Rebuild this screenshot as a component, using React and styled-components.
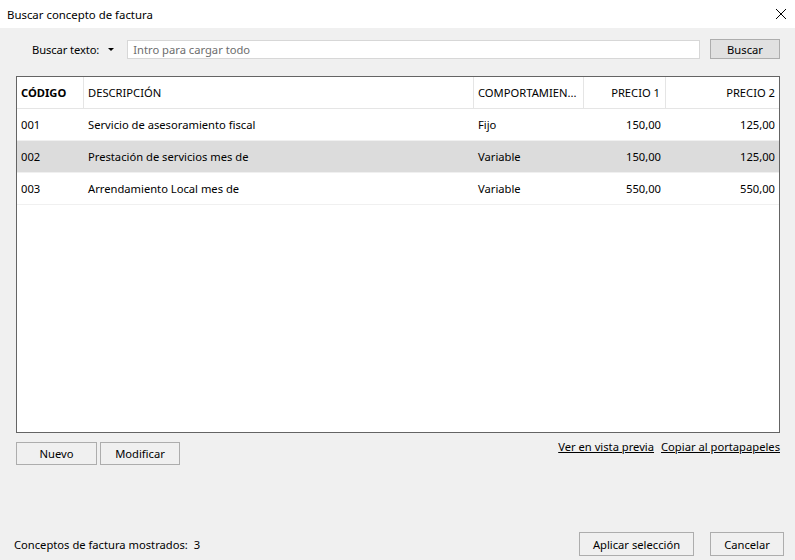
import styled, { createGlobalStyle } from "styled-components";

const GlobalStyle = createGlobalStyle`
    html, body {
        margin: 0;
        padding: 0;
        background: #f0f0f0;
    }
    body {
        font-family: "Noto Sans", "Liberation Sans", sans-serif;
        font-size: 11.2px;
        color: #000;
    }
`;

const Window = styled.div`
    width: 795px;
    height: 560px;
    display: flex;
    flex-direction: column;
    background: #f0f0f0;
    overflow: hidden;
`;

const TitleBar = styled.div`
    height: 28px;
    flex: none;
    background: #fff;
    display: flex;
    align-items: center;
    justify-content: space-between;
    padding: 0 7px;
`;

const Title = styled.span`
    font-size: 11.4px;
`;

const CloseButton = styled.button`
    border: none;
    background: none;
    padding: 0;
    width: 12px;
    height: 12px;
    margin-right: 1px;
    display: flex;
`;

const Body = styled.div`
    flex: 1;
    display: flex;
    flex-direction: column;
    padding: 11px 15px 0 16px;
`;

const SearchRow = styled.div`
    display: flex;
    align-items: center;
    height: 20px;
    padding-left: 16px;
`;

const SearchLabel = styled.span`
    white-space: nowrap;
    letter-spacing: -0.1px;
`;

const Caret = styled.span`
    width: 0;
    height: 0;
    border-left: 3px solid transparent;
    border-right: 3px solid transparent;
    border-top: 3px solid #000;
    margin: 0 13px 0 9px;
`;

const SearchInput = styled.input`
    flex: 1;
    height: 19px;
    box-sizing: border-box;
    border: 1px solid #d7d7d7;
    background: #fff;
    font-family: inherit;
    font-size: 11.2px;
    padding: 0 5px;
    margin-right: 10px;
    outline: none;
    &::placeholder {
        color: #6d6d6d;
    }
`;

const Button = styled.button`
    width: ${p => p.$w}px;
    height: ${p => p.$h || 23}px;
    box-sizing: border-box;
    border: 1px solid #adadad;
    background: ${p => (p.$dark ? "#e1e1e1" : "#f0f0f0")};
    font-family: inherit;
    font-size: 11.2px;
    color: #000;
    padding: 0;
`;

const Grid = styled.div`
    margin-top: 17px;
    height: 357px;
    box-sizing: border-box;
    border: 1px solid #646464;
    background: #fff;
`;

const Columns = "67px 390px 110px 82px 114px";

const HeaderRow = styled.div`
    display: grid;
    grid-template-columns: ${Columns};
    height: 32px;
    box-sizing: border-box;
    border-bottom: 1px solid #e5e5e5;
`;

const HeaderCell = styled.div`
    display: flex;
    align-items: center;
    justify-content: ${p => (p.$right ? "flex-end" : "flex-start")};
    padding: 0 ${p => (p.$right ? 5 : 4)}px 0 4px;
    border-right: ${p => (p.$last ? "none" : "1px solid #e5e5e5")};
    font-weight: ${p => (p.$bold ? 700 : 400)};
    white-space: nowrap;
    overflow: hidden;
`;

const Row = styled.div`
    display: grid;
    grid-template-columns: ${Columns};
    height: 32px;
    box-sizing: border-box;
    border-bottom: 1px solid #f0f0f0;
    background: ${p => (p.$selected ? "#dcdcdc" : "#fff")};
`;

const Cell = styled.div`
    display: flex;
    align-items: center;
    justify-content: ${p => (p.$right ? "flex-end" : "flex-start")};
    padding: 0 ${p => (p.$right ? 5 : 4)}px 0 4px;
    white-space: nowrap;
`;

const ActionRow = styled.div`
    display: flex;
    align-items: center;
    margin-top: 9px;
    gap: 3px;
`;

const Links = styled.div`
    margin-left: auto;
    display: flex;
    gap: 7px;
    margin-top: -15px;
`;

const LinkText = styled.a`
    color: #000;
    text-decoration: underline;
    cursor: pointer;
`;

const Footer = styled.div`
    display: flex;
    align-items: center;
    padding: 0 11px 4px 14px;
    height: 24px;
`;

const Count = styled.span`
    flex: 1;
    white-space: pre;
`;

const FooterButtons = styled.div`
    display: flex;
    gap: 16px;
`;

const rows = [
    { code: "001", desc: "Servicio de asesoramiento fiscal", type: "Fijo", p1: "150,00", p2: "125,00" },
    { code: "002", desc: "Prestación de servicios mes de", type: "Variable", p1: "150,00", p2: "125,00", selected: true },
    { code: "003", desc: "Arrendamiento Local mes de", type: "Variable", p1: "550,00", p2: "550,00" },
];

const App = () => {
    return (
        <Window>
            <GlobalStyle />
            <TitleBar>
                <Title>Buscar concepto de factura</Title>
                <CloseButton aria-label="Cerrar">
                    <svg width="12" height="12" viewBox="0 0 12 12">
                        <path d="M1 1 L11 11 M11 1 L1 11" stroke="#000" strokeWidth="1" />
                    </svg>
                </CloseButton>
            </TitleBar>

            <Body>
                <SearchRow>
                    <SearchLabel>Buscar texto:</SearchLabel>
                    <Caret />
                    <SearchInput placeholder="Intro para cargar todo" />
                    <Button $w={70} $h={20} $dark>Buscar</Button>
                </SearchRow>

                <Grid>
                    <HeaderRow>
                        <HeaderCell $bold>CÓDIGO</HeaderCell>
                        <HeaderCell>DESCRIPCIÓN</HeaderCell>
                        <HeaderCell>COMPORTAMIEN...</HeaderCell>
                        <HeaderCell $right>PRECIO 1</HeaderCell>
                        <HeaderCell $right $last>PRECIO 2</HeaderCell>
                    </HeaderRow>
                    {rows.map(r => (
                        <Row key={r.code} $selected={r.selected}>
                            <Cell>{r.code}</Cell>
                            <Cell>{r.desc}</Cell>
                            <Cell>{r.type}</Cell>
                            <Cell $right>{r.p1}</Cell>
                            <Cell $right>{r.p2}</Cell>
                        </Row>
                    ))}
                </Grid>

                <ActionRow>
                    <Button $w={81}>Nuevo</Button>
                    <Button $w={80}>Modificar</Button>
                    <Links>
                        <LinkText>Ver en vista previa</LinkText>
                        <LinkText>Copiar al portapapeles</LinkText>
                    </Links>
                </ActionRow>
            </Body>

            <Footer>
                <Count>Conceptos de factura mostrados:  3</Count>
                <FooterButtons>
                    <Button $w={115} $h={24}>Aplicar selección</Button>
                    <Button $w={74} $h={24}>Cancelar</Button>
                </FooterButtons>
            </Footer>
        </Window>
    );
};

export default App;
